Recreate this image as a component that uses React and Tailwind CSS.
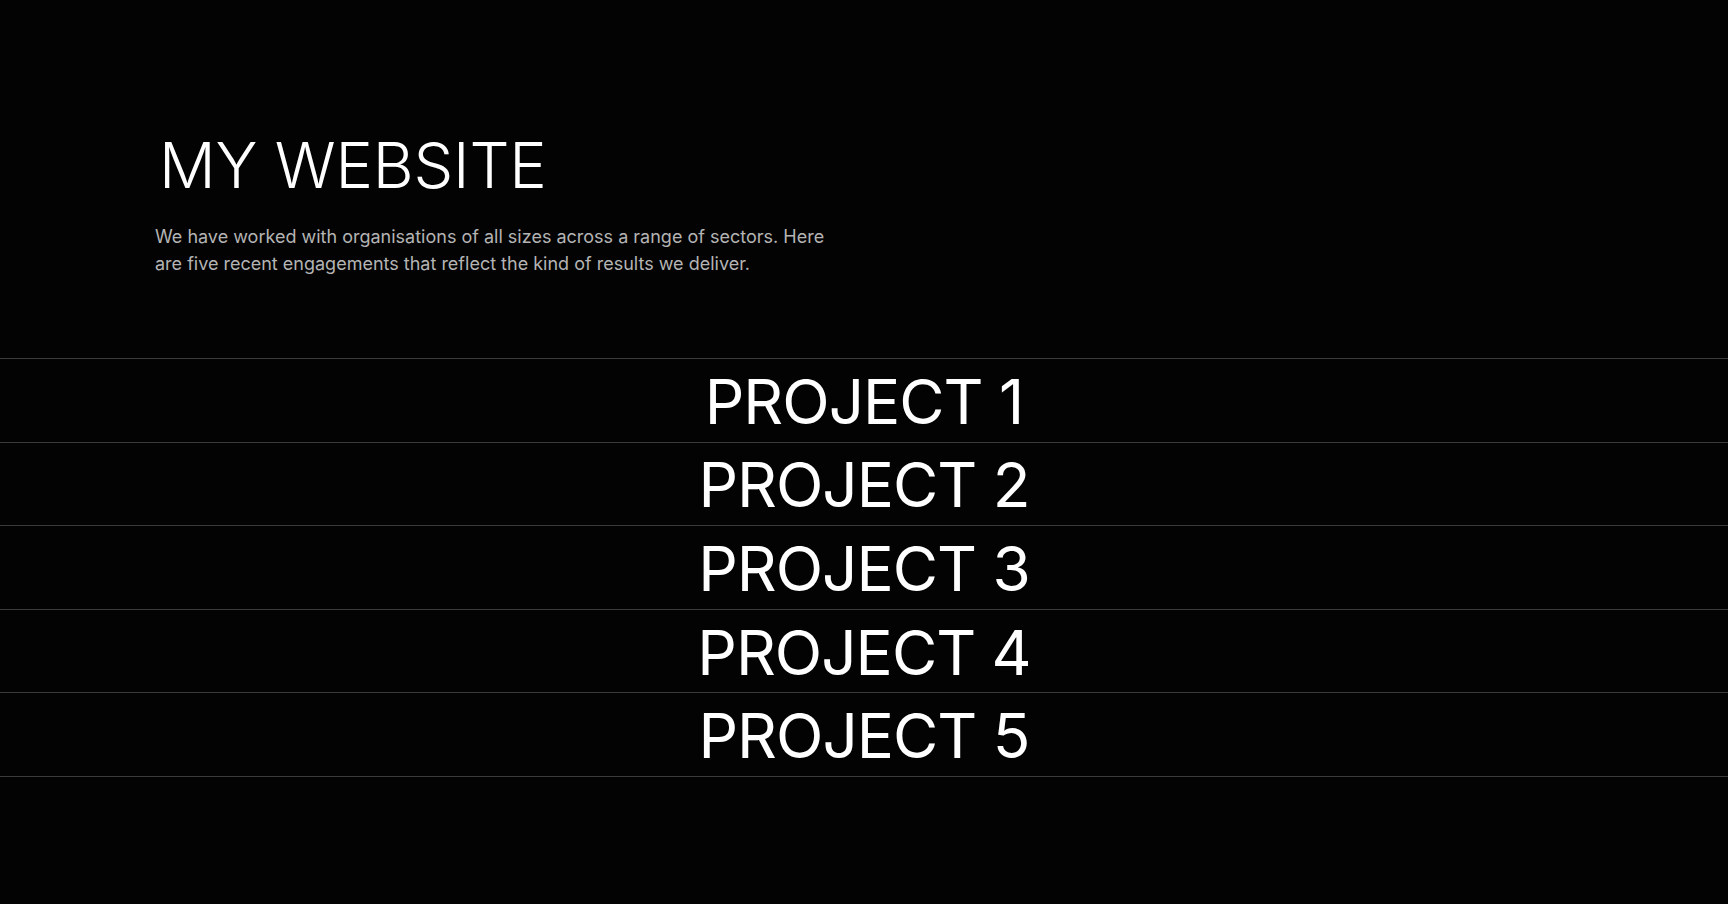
export default function App() {
  const projects = ["PROJECT 1", "PROJECT 2", "PROJECT 3", "PROJECT 4", "PROJECT 5"];
  return (
    <div className="min-h-screen w-full bg-[#030303] text-white">
      <header className="pl-[155px] pt-[134px]">
        <h1 className="pl-[4px] font-['Inter',sans-serif] text-[63px] font-light leading-none tracking-[-0.2px] text-white">
          MY WEBSITE
        </h1>
        <p className="mt-[26px] max-w-[680px] font-['Inter',sans-serif] text-[18px] leading-[27px] text-[#b4b4b4]">
          We have worked with organisations of all sizes across a range of sectors. Here are five recent engagements that reflect the kind of results we deliver.
        </p>
      </header>
      <div className="mt-[81px] border-t border-[#3a3a3a]">
        {projects.map((p) => (
          <div
            key={p}
            className="flex h-[83.6px] items-center justify-center border-b border-[#3a3a3a] pt-[3px] font-['Inter',sans-serif] text-[62px] font-normal leading-none tracking-[-1px] text-white"
          >
            {p}
          </div>
        ))}
      </div>
    </div>
  );
}
